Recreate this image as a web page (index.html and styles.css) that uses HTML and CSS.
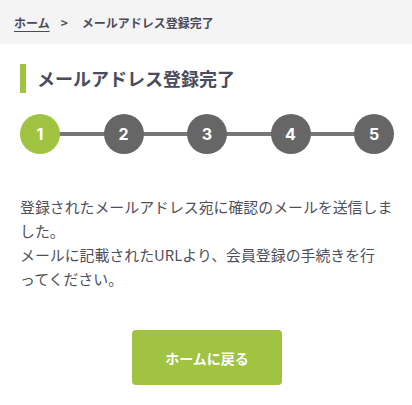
FILE: index.html
```html
<!DOCTYPE html>
<html lang="ja">
<head>
<meta charset="utf-8">
<title>メールアドレス登録完了</title>
<link rel="stylesheet" href="styles.css">
</head>
<body>
<nav class="breadcrumb">
  <a class="crumb-link" href="#">ホーム</a>
  <span class="crumb-sep">&gt;</span>
  <span class="crumb-current">メールアドレス登録完了</span>
</nav>
<main class="content">
  <h1 class="page-title">メールアドレス登録完了</h1>
  <ol class="steps">
    <li class="step active">1</li>
    <li class="step">2</li>
    <li class="step">3</li>
    <li class="step">4</li>
    <li class="step">5</li>
  </ol>
  <p class="message">登録されたメールアドレス宛に確認のメールを送信しました。<br>メールに記載されたURLより、会員登録の手続きを行<br>ってください。</p>
  <div class="actions">
    <a class="btn" href="#">ホームに戻る</a>
  </div>
</main>
</body>
</html>
```
FILE: styles.css
```css
* { box-sizing: border-box; }
html, body { margin: 0; padding: 0; background: #fff; }
body {
  font-family: "Noto Sans CJK JP", "Noto Sans", sans-serif;
  color: #4a4b5a;
}
.breadcrumb {
  height: 44px;
  background: #f4f4f4;
  display: flex;
  align-items: center;
  padding-left: 14px;
  font-size: 12px;
  font-weight: 700;
  color: #4a4b5a;
}
.crumb-link { color: #4a4b5a; text-decoration: underline; text-underline-offset: 3px; }
.crumb-sep { margin: 0 14px 0 11px; }
.content { padding: 20px 18px 0 20px; }
.page-title {
  margin: 0;
  height: 29px;
  line-height: 29px;
  border-left: 6px solid #a0c442;
  padding-left: 11px;
  font-size: 18px;
  font-weight: 700;
  color: #4a4b5c;
}
.steps {
  list-style: none;
  margin: 21px 0 0;
  padding: 0;
  display: flex;
  justify-content: space-between;
  position: relative;
}
.steps::before {
  content: "";
  position: absolute;
  left: 20px; right: 20px; top: 18px;
  height: 4px;
  background: #777;
}
.step {
  position: relative;
  width: 40px; height: 40px;
  border-radius: 50%;
  background: #666;
  color: #fff;
  font-family: "Inter", "Noto Sans", sans-serif;
  font-weight: 700;
  font-size: 16px;
  display: flex; align-items: center; justify-content: center;
}
.step.active { background: #a0c442; }
.message {
  margin: 41px 0 0;
  font-size: 14.9px;
  line-height: 24px;
  color: #4f4f5a;
}
.actions { display: flex; justify-content: center; margin-top: 39px; }
.btn {
  width: 150px; height: 55px;
  border-radius: 4px;
  background: #a0c442;
  color: #fff;
  font-size: 14px;
  font-weight: 700;
  text-decoration: none;
  display: flex; align-items: center; justify-content: center;
}
```
